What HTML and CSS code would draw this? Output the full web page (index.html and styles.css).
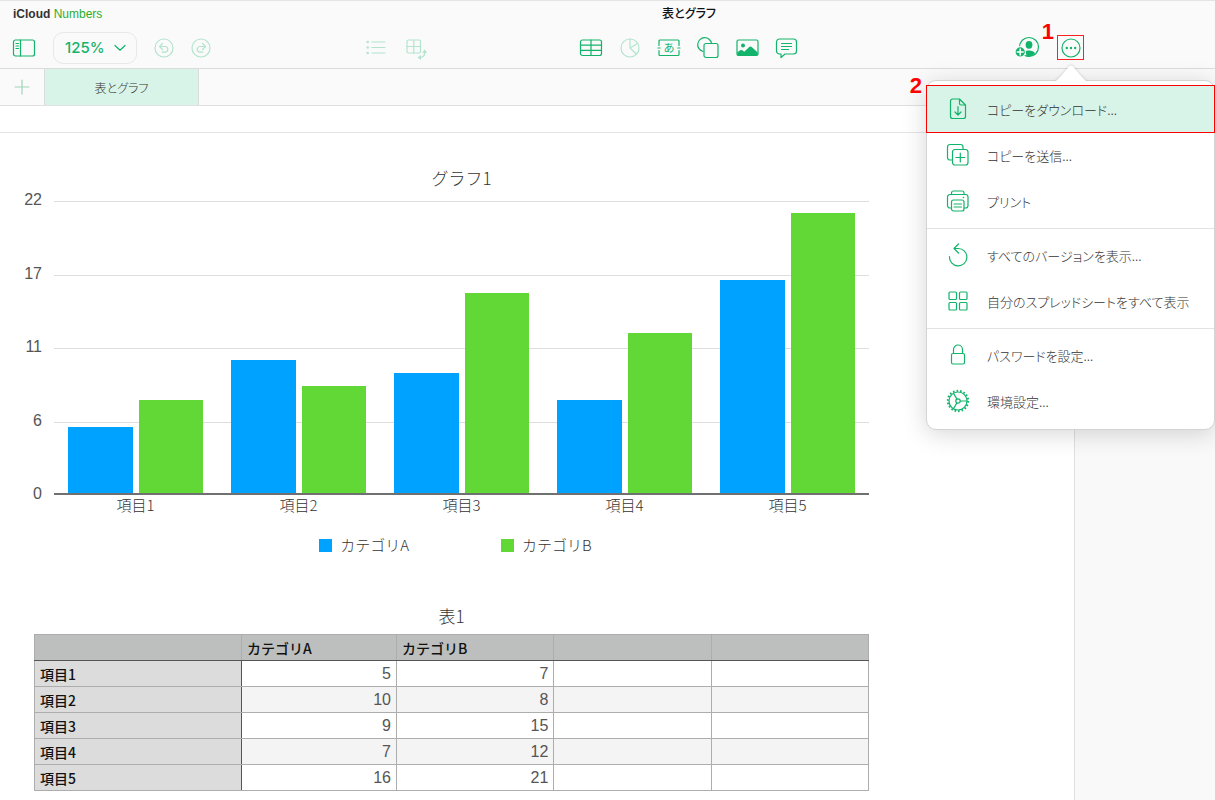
FILE: index.html
```html
<!DOCTYPE html>
<html lang="ja">
<head>
<meta charset="utf-8">
<meta name="viewport" content="width=device-width, initial-scale=1">
<title>表とグラフ</title>
<link rel="stylesheet" href="styles.css">
</head>
<body>
<div class="app">
  <header class="header">
    <div class="titlebar">
      <a class="brand" href="#"><span class="brand-cloud">iCloud</span> Numbers</a>
      <h1 class="doc-title">表とグラフ</h1>
    </div>
    <div class="toolbar">
      <div class="tools tools-left">
        <button class="tool" aria-label="表示"><svg width="24" height="20" viewBox="0 0 24 20"><rect x="1.5" y="2" width="21" height="16" rx="2"/><path d="M8.500 2v16M4 5.500h2.500M4 8h2.500M4 10.500h2.500"/></svg></button>
        <div class="zoom">
          <select class="zoom-select" aria-label="拡大/縮小"><option>125%</option></select>
          <svg class="zoom-arrow" width="12" height="8" viewBox="0 0 12 8"><path d="M1 1.500l5 4.700 5-4.700"/></svg>
        </div>
        <button class="tool history off" aria-label="取り消す"><svg width="20" height="20" viewBox="0 0 20 20"><circle cx="10" cy="10" r="9"/><path d="M8.500 5.500L5.500 8.500l3 3M5.500 8.500h5.500a2.800 2.800 0 0 1 0 5.600H8"/></svg></button>
        <button class="tool off" aria-label="やり直す"><svg width="20" height="20" viewBox="0 0 20 20"><circle cx="10" cy="10" r="9"/><path d="M11.500 5.500l3 3-3 3M14.500 8.500H9a2.800 2.800 0 0 0 0 5.600h3"/></svg></button>
      </div>
      <div class="tools tools-format">
        <button class="tool off" aria-label="カテゴリ"><svg width="20" height="20" viewBox="0 0 20 20"><path d="M6 4h13M6 9.500h13M6 15h13"/><g class="solid"><circle cx="1.700" cy="4" r="1.300"/><circle cx="1.700" cy="9.500" r="1.300"/><circle cx="1.700" cy="15" r="1.300"/></g></svg></button>
        <button class="tool off" aria-label="ピボット"><svg width="22" height="24" viewBox="0 0 22 24"><rect x="1" y="4" width="13.500" height="13" rx="1.500"/><path d="M7.800 4v13M1 10.500h13.500M18.500 16c.4 3.500-1 5.300-4.500 5.500"/><path class="solid" d="M16.200 17l2.500-3.500 2.500 3.500zM15 19v5l-3.500-2.500z"/></svg></button>
      </div>
      <div class="tools tools-insert">
        <button class="tool" aria-label="表"><svg width="24" height="20" viewBox="0 0 24 20"><rect x="1.500" y="2" width="21" height="15.500" rx="2"/><path d="M12 2v15.500M1.500 7.100h21M1.500 12.300h21"/></svg></button>
        <button class="tool off" aria-label="グラフ"><svg width="24" height="20" viewBox="0 0 24 20"><circle cx="12" cy="10" r="9"/><path d="M12 1v9l6.500 6.200M12 10l7.500-4.500"/></svg></button>
        <button class="tool" aria-label="テキスト"><svg width="24" height="20" viewBox="0 0 24 20"><path d="M2 7.500V3a1 1 0 0 1 1-1h18a1 1 0 0 1 1 1v4.500M2 12.500v4a1 1 0 0 0 1 1h18a1 1 0 0 0 1-1v-4M1 10h2.200M20.800 10h2.200"/><text class="icon-text" x="12" y="14">あ</text></svg></button>
        <button class="tool" aria-label="図形"><svg width="24" height="22" viewBox="0 0 24 22"><path d="M7 14.500A7 7 0 1 1 15.600 6.500"/><rect x="8" y="6.500" width="14" height="14" rx="2"/></svg></button>
        <button class="tool" aria-label="画像"><svg width="24" height="20" viewBox="0 0 24 20"><rect x="2" y="2" width="21" height="15.500" rx="1.500"/><circle class="solid" cx="8" cy="7.500" r="2"/><path class="solid" d="M2.300 17.200v-2.900l3-2c1-.6 1.900-.3 2.700.5l1.200 1 5-4.800c.8-.7 1.700-.7 2.500 0l6 5.600v2.600z"/></svg></button>
        <button class="tool" aria-label="コメント"><svg width="24" height="22" viewBox="0 0 24 22"><path d="M6 17H5.500a3 3 0 0 1-3-3V5a3 3 0 0 1 3-3h14a3 3 0 0 1 3 3v9a3 3 0 0 1-3 3h-8.500L7 20.500V17zM7.500 6.500h10M7.500 9.500h10M7.500 12.500h7"/></svg></button>
      </div>
      <div class="tools tools-right">
        <button class="tool" aria-label="共同制作"><svg width="26" height="24" viewBox="0 0 26 24"><circle cx="15" cy="11" r="9.500"/><g class="solid"><ellipse cx="15" cy="8.800" rx="3.400" ry="3.900"/><path d="M11.800 20.500c.8-1 .7-3-.8-5 2-1.700 8.500-1.700 10 1.800-2 2.400-5 4-9.200 3.200z"/></g><circle class="badge" cx="6.200" cy="15.900" r="5.200"/><path class="plus" d="M3.200 15.900h6M6.200 12.900v6"/></svg></button>
        <div class="more">
          <button class="tool more-button" aria-label="その他" aria-expanded="true"><svg width="20" height="20" viewBox="0 0 20 20"><circle cx="10" cy="10" r="9"/><g class="solid"><circle cx="5.800" cy="10" r="1.200"/><circle cx="10" cy="10" r="1.200"/><circle cx="14.200" cy="10" r="1.200"/></g></svg></button>
          <span class="step step-one">1</span>
        </div>
      </div>
    </div>
  </header>

  <nav class="tabs">
    <button class="tab-add" aria-label="シートを追加"><svg width="16" height="16" viewBox="0 0 16 16"><path d="M8 1v14M1 8h14"/></svg></button>
    <button class="tab">表とグラフ</button>
  </nav>
  <div class="formula-bar"></div>

  <div class="workspace">
    <main class="sheet">
      <figure class="chart">
        <figcaption class="object-title chart-title">グラフ1</figcaption>
        <div class="axis"><span>22</span><span>17</span><span>11</span><span>6</span><span>0</span></div>
        <div class="grid-lines"><i></i><i></i><i></i><i></i></div>
        <div class="bars">
          <div class="group"><b class="bar blue" style="height:22.500%"></b><b class="bar green" style="height:31.800%"></b></div>
          <div class="group"><b class="bar blue" style="height:45.400%"></b><b class="bar green" style="height:36.400%"></b></div>
          <div class="group"><b class="bar blue" style="height:40.900%"></b><b class="bar green" style="height:68.200%"></b></div>
          <div class="group"><b class="bar blue" style="height:31.800%"></b><b class="bar green" style="height:54.500%"></b></div>
          <div class="group"><b class="bar blue" style="height:72.700%"></b><b class="bar green" style="height:95.400%"></b></div>
        </div>
        <div class="categories"><span>項目1</span><span>項目2</span><span>項目3</span><span>項目4</span><span>項目5</span></div>
        <div class="legend"><span class="key"><i class="swatch blue"></i>カテゴリA</span><span class="key"><i class="swatch green"></i>カテゴリB</span></div>
      </figure>

      <div class="table-object">
        <h2 class="object-title" id="table-title">表1</h2>
        <table class="data" aria-labelledby="table-title">
          <colgroup><col class="col-head"><col class="col-a"><col class="col-b"><col class="col-b"><col class="col-b"></colgroup>
          <thead><tr><th></th><th>カテゴリA</th><th>カテゴリB</th><th></th><th></th></tr></thead>
          <tbody>
            <tr><th scope="row">項目1</th><td>5</td><td>7</td><td></td><td></td></tr>
            <tr><th scope="row">項目2</th><td>10</td><td>8</td><td></td><td></td></tr>
            <tr><th scope="row">項目3</th><td>9</td><td>15</td><td></td><td></td></tr>
            <tr><th scope="row">項目4</th><td>7</td><td>12</td><td></td><td></td></tr>
            <tr><th scope="row">項目5</th><td>16</td><td>21</td><td></td><td></td></tr>
          </tbody>
        </table>
      </div>
    </main>
    <aside class="side"></aside>
  </div>

  <div class="menu">
    <svg class="menu-arrow" width="36" height="18" viewBox="0 0 36 18"><path d="M0 18C4 17 5 15 8 12L16 2.500Q18 .5 20 2.500L28 12C31 15 32 17 36 18z"/></svg>
    <span class="step step-two">2</span>
    <button class="item selected"><svg width="24" height="24" viewBox="0 0 24 24"><path d="M13.500 2H6.500a2 2 0 0 0-2 2v15.500a2 2 0 0 0 2 2h11a2 2 0 0 0 2-2V8zM13.500 2v4.500a1.500 1.500 0 0 0 1.500 1.500h4.500M12 9.500v8.500M9 15l3 3 3-3"/></svg>コピーをダウンロード...</button>
    <button class="item"><svg width="24" height="24" viewBox="0 0 24 24"><path d="M6.500 17H4a2.500 2.500 0 0 1-2.500-2.500V4A2.500 2.500 0 0 1 4 1.500h10.500A2.500 2.500 0 0 1 17 4v2.500"/><rect x="6.500" y="6.500" width="15.500" height="15.500" rx="2.500"/><path d="M14.300 10v9M9.800 14.500h9"/></svg>コピーを送信...</button>
    <button class="item"><svg width="24" height="24" viewBox="0 0 24 24"><path d="M5.500 5.500V4A2 2 0 0 1 7.500 2h8.500a2 2 0 0 1 2 2v1.500M5.500 19H4a2.500 2.500 0 0 1-2.500-2.500V8A2.500 2.500 0 0 1 4 5.500h15.500A2.500 2.500 0 0 1 22 8v8.500a2.500 2.500 0 0 1-2.500 2.500H18"/><rect x="5.500" y="11" width="12.500" height="11" rx="2"/><path d="M8 15h7.500M8 18h7.500"/><circle class="solid" cx="17.500" cy="8.500" r=".8"/></svg>プリント</button>
    <hr class="divider">
    <button class="item"><svg width="24" height="24" viewBox="0 0 24 24"><path d="M3.500 13.500A8.700 8.700 0 1 0 12.200 5.500L8 5.500M12.500 1L8 5.500l4.500 4.500"/></svg>すべてのバージョンを表示...</button>
    <button class="item"><svg width="24" height="24" viewBox="0 0 24 24"><rect x="3" y="3" width="7.500" height="7.500" rx="1"/><rect x="13.500" y="3" width="7.500" height="7.500" rx="1"/><rect x="3" y="13.500" width="7.500" height="7.500" rx="1"/><rect x="13.500" y="13.500" width="7.500" height="7.500" rx="1"/></svg>自分のスプレッドシートをすべて表示</button>
    <hr class="divider">
    <button class="item"><svg width="24" height="24" viewBox="0 0 24 24"><rect x="5.500" y="10.500" width="13" height="10.500" rx="1.500"/><path d="M7.500 10.500V6.500a4.500 4.500 0 0 1 9 0v4"/></svg>パスワードを設定...</button>
    <button class="item"><svg width="24" height="24" viewBox="0 0 24 24"><circle cx="12" cy="12" r="9"/><circle class="teeth" cx="12" cy="12" r="10.200"/><circle cx="12" cy="12" r="2.200"/><path d="M14.200 12H21M10.900 10.100L7.500 4.200M10.900 13.900L7.500 19.800"/></svg>環境設定...</button>
  </div>
</div>
</body>
</html>
```

FILE: styles.css
```css
* { box-sizing: border-box; }

body {
  margin: 0;
  font-family: "Noto Sans CJK JP", sans-serif;
  font-weight: 300;
  color: #333;
  background: #fff;
}

button {
  margin: 0;
  padding: 0;
  border: 0;
  background: none;
  font: inherit;
  color: inherit;
}

svg {
  display: block;
  flex: none;
  fill: none;
  stroke: #12b36a;
  stroke-width: 1.2;
  stroke-linecap: round;
  stroke-linejoin: round;
}

.solid { fill: #12b36a; stroke: none; }

.app {
  position: relative;
  display: flex;
  flex-direction: column;
  min-height: 100vh;
  overflow: hidden;
}

/* Header */
.header {
  height: 69px;
  border-top: 1px solid #e4e4e4;
  border-bottom: 1px solid #dcdcdc;
  background: #fafafa;
}

.titlebar {
  display: grid;
  grid-template-columns: 163px 1fr;
  align-items: center;
  height: 26px;
}

.brand {
  padding-left: 13px;
  font: 400 12px/16px "Liberation Sans", sans-serif;
  color: #2cae2c;
  text-decoration: none;
}

.brand-cloud { font-weight: 700; color: #333; }

.doc-title {
  margin: 0;
  padding-bottom: 2px;
  font-size: 12px;
  line-height: 20px;
  font-weight: 500;
  font-feature-settings: "palt";
  text-align: center;
  color: #111;
}

.toolbar {
  display: grid;
  grid-template-columns: 366px 213px 1fr auto;
  height: 41px;
}

.tools { display: flex; align-items: center; }
.tools-left { padding-left: 12px; gap: 17px; }
.tools-format { gap: 20px; }
.tools-insert { gap: 15px; }
.tools-right { padding-right: 131px; gap: 17px; }
.off { opacity: .3; }

.zoom { display: grid; align-items: center; }
.zoom-select, .zoom-arrow { grid-area: 1 / 1; }
.zoom-select {
  appearance: none;
  width: 84px;
  height: 32px;
  padding: 0 11px;
  border: 1px solid #e8e8e8;
  border-radius: 10px;
  background: none;
  font: 500 15px/20px Inter, sans-serif;
  color: #12b36a;
}
.zoom-arrow { justify-self: end; margin-right: 11px; pointer-events: none; }

.icon-text {
  font-size: 11px;
  font-weight: 400;
  text-anchor: middle;
  fill: #12b36a;
  stroke: none;
}

.badge { fill: #12b36a; stroke: #fafafa; }
.plus { stroke: #fff; stroke-width: 1.5; }

.more { position: relative; }
.more-button {
  display: grid;
  place-items: center;
  width: 27px;
  height: 25px;
  border: 1px solid #f22;
}

.step {
  position: absolute;
  font: 700 22px/24px "Liberation Sans", sans-serif;
  color: #f00;
}
.step-one { right: 30px; top: -15px; }
.step-two { right: 292px; top: -7px; }

/* Sheet tabs */
.tabs {
  display: flex;
  height: 37px;
  border-bottom: 1px solid #e0e0e0;
  background: #fafafa;
}

.tab-add {
  display: grid;
  place-items: center;
  width: 45px;
  border-right: 1px solid #dcdcdc;
}
.tab-add svg { stroke: #9fd6b8; }

.tab {
  width: 154px;
  border-right: 1px solid #dcdcdc;
  background: #d8f3e7;
  font-size: 12px;
  font-feature-settings: "palt";
}

.formula-bar {
  height: 27px;
  border-bottom: 1px solid #e4e4e4;
}

/* Canvas */
.workspace { display: flex; flex: 1; }
.sheet { flex: 1; padding: 33px 205px 9px 0; }
.side { width: 141px; border-left: 1px solid #e0e0e0; background: #f9f9f9; }

.object-title {
  margin: 0;
  font-size: 17px;
  line-height: 24px;
  font-weight: 300;
  text-align: center;
}

.chart {
  display: grid;
  grid-template-columns: 42px 1fr;
  grid-template-rows: 24px 305px auto auto;
  column-gap: 12px;
  margin: 0;
}

.chart-title { grid-area: 1 / 2; }

.axis {
  grid-area: 2 / 1;
  display: flex;
  flex-direction: column;
  justify-content: space-between;
  margin-bottom: -9px;
  text-align: right;
  font: 16px/20px "Liberation Sans", sans-serif;
  color: #555;
}

.grid-lines {
  grid-area: 2 / 2;
  display: grid;
  grid-template-rows: repeat(4, 1fr);
  margin-top: 11px;
}
.grid-lines i { border-top: 1px solid #dedede; }

.bars {
  grid-area: 2 / 2;
  display: grid;
  grid-template-columns: repeat(5, 1fr);
  margin-top: 10px;
  border-bottom: 2px solid #707070;
}

.group {
  display: flex;
  align-items: flex-end;
  gap: 6px;
  padding: 0 8.500%;
}
.bar { flex: 1; }
.blue { background: #00a2ff; }
.green { background: #61d836; }

.categories {
  grid-area: 3 / 2;
  display: grid;
  grid-template-columns: repeat(5, 1fr);
  text-align: center;
  font-size: 15px;
  line-height: 20px;
}

.legend {
  grid-area: 4 / 2;
  display: flex;
  justify-content: center;
  gap: 92px;
  margin-top: 20px;
  padding-right: 12px;
  font-size: 15px;
  line-height: 20px;
}
.key { display: flex; align-items: center; gap: 8px; }
.swatch { width: 13px; height: 13px; }

/* Table */
.table-object { margin: 49px 0 0 34px; }

.data {
  width: 100%;
  margin-top: 6px;
  border-collapse: collapse;
  table-layout: fixed;
  font-size: 14px;
  line-height: 20px;
}
.col-head { width: 207px; }
.col-a { width: 155px; }

.data th, .data td {
  height: 26px;
  padding: 0 5px;
  border: 1px solid #adadad;
}
.data td {
  text-align: right;
  font: 16px/20px "Liberation Sans", sans-serif;
  color: #555;
}
.data th { text-align: left; font-weight: 500; color: #111; }
.data thead th { background: #bdbfbe; border-bottom-color: #555; }
.data tbody th { background: #dcdcdc; border-right-color: #555; }
.data tbody tr:nth-child(even) td { background: #f4f4f4; }

/* Popover menu */
.menu {
  position: absolute;
  top: 80px;
  right: 0;
  width: 289px;
  padding: 5px 0;
  border: 1px solid #d4d4d4;
  border-radius: 10px;
  background: #fff;
  box-shadow: 0 4px 24px rgba(0, 0, 0, .16);
}

.menu-arrow {
  position: absolute;
  right: 125px;
  top: -17px;
  filter: drop-shadow(0 -1px 1px rgba(0, 0, 0, .12));
}
.menu-arrow path { fill: #fff; stroke: none; }

.item {
  display: flex;
  align-items: center;
  gap: 17px;
  width: 100%;
  height: 46px;
  padding-left: 19px;
  font-size: 13px;
  font-feature-settings: "palt";
  text-align: left;
  white-space: nowrap;
}
.selected { background: #d8f3e7; outline: 1px solid #f00; }

.divider {
  margin: 4px 0 3px;
  border: 0;
  border-top: 1px solid #e2e2e2;
}

.teeth { stroke-width: 2; stroke-dasharray: 1.6 1.96; stroke-linecap: butt; }
```
